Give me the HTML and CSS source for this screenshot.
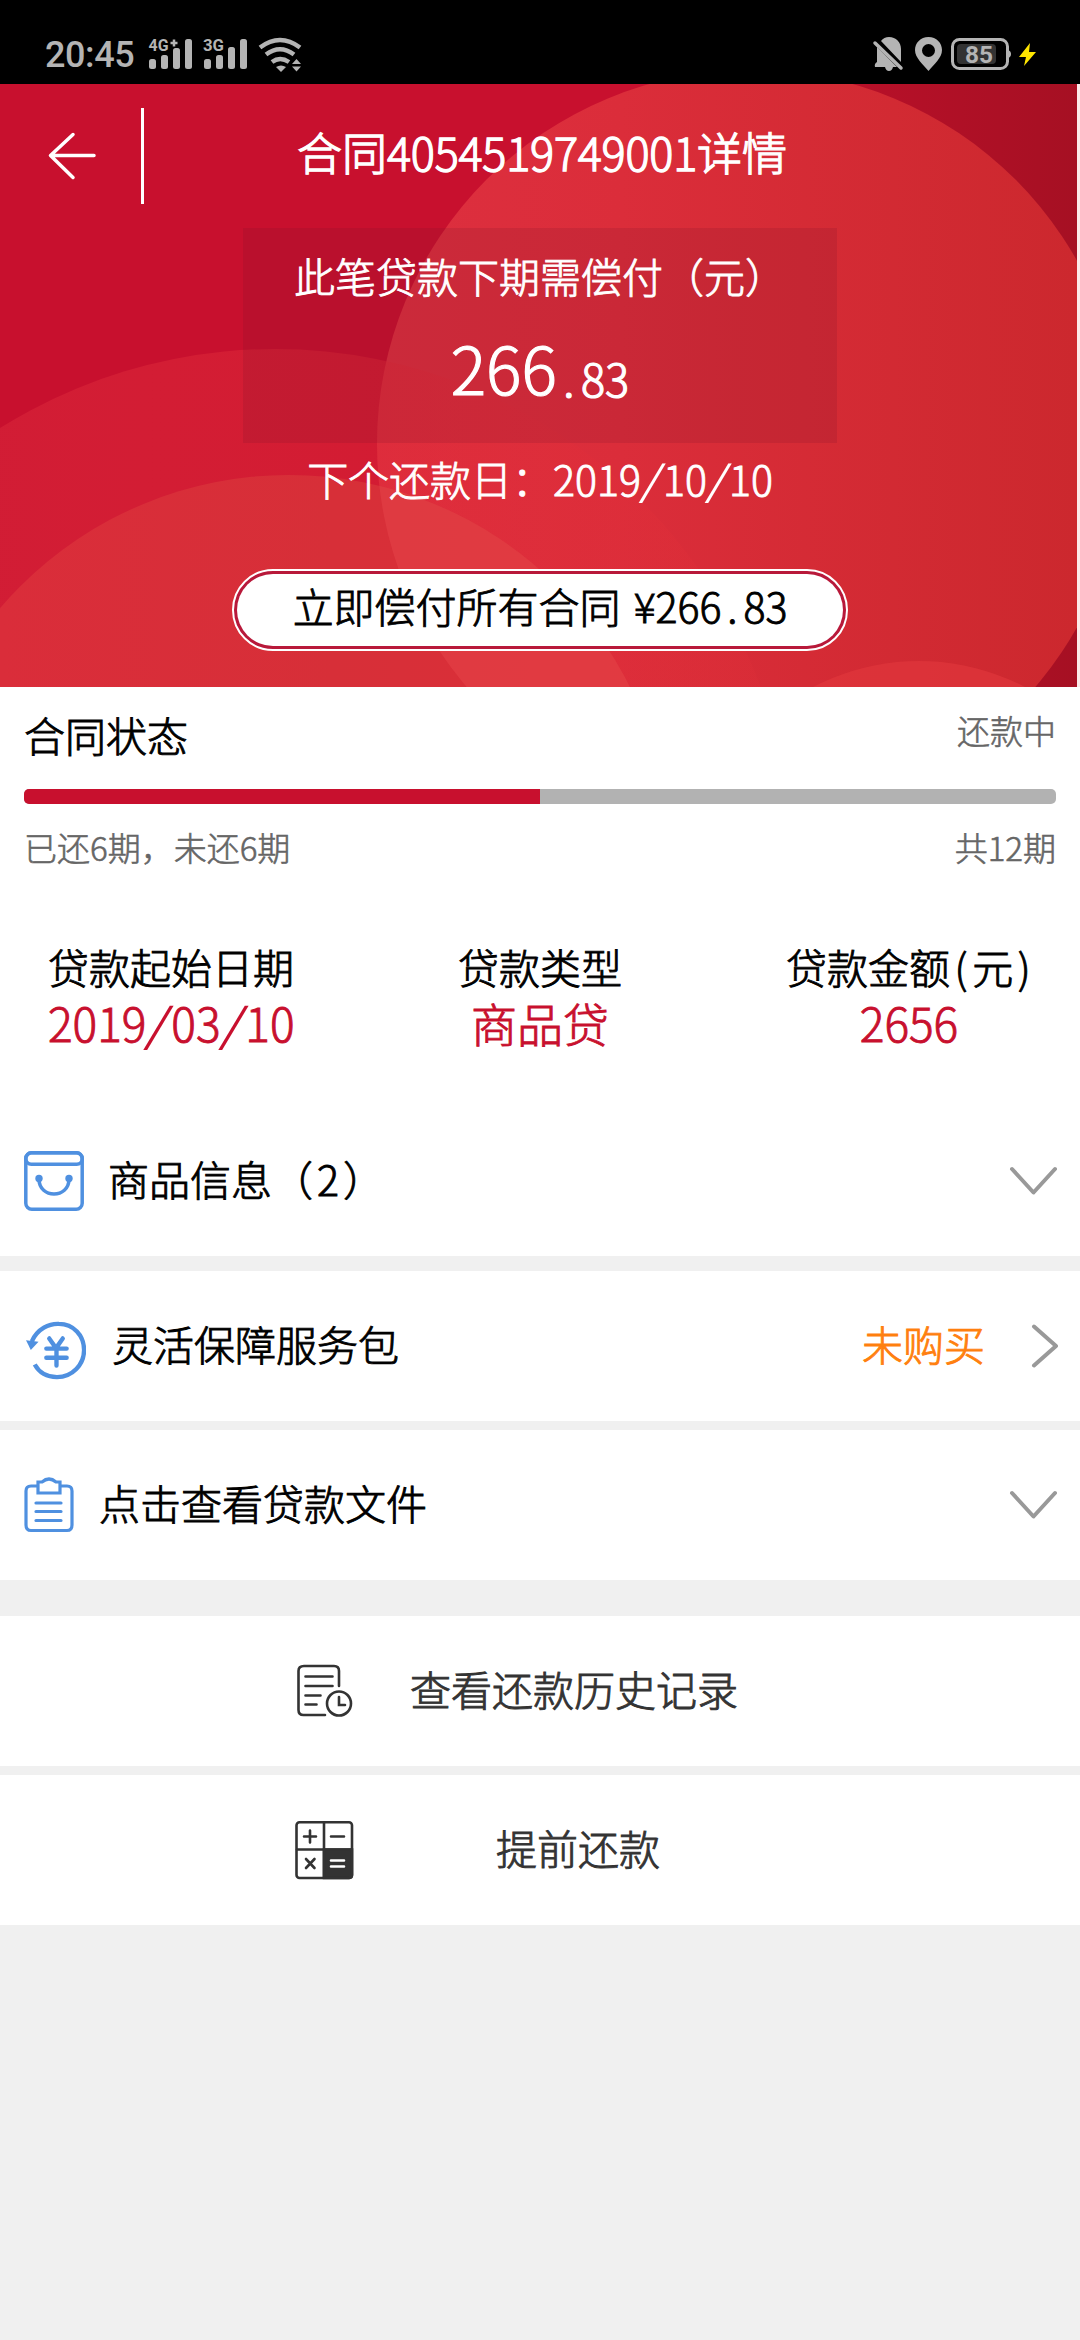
FILE: index.html
```html
<!DOCTYPE html>
<html lang="zh-CN">
<head>
<meta charset="utf-8">
<title>合同详情</title>
<link rel="stylesheet" href="styles.css">
</head>
<body>
<div class="status-bar">
  <span class="clock">20:45</span>
  <svg class="signals" width="154" height="36" viewBox="148 36 154 36" fill="#b4b4b4">
    <text class="net" x="148.500" y="51" textLength="20" lengthAdjust="spacingAndGlyphs">4G</text>
    <path d="M174 39.500v7M170.500 43h7" stroke="#b4b4b4" stroke-width="2.500"/>
    <rect x="149" y="59" width="7" height="10" rx="2.500"/><rect x="161" y="55" width="7" height="14" rx="2.500"/><rect x="173" y="48" width="7" height="21" rx="2.500"/><rect x="185" y="39" width="7" height="30" rx="2.500"/>
    <text class="net" x="203" y="51" textLength="21" lengthAdjust="spacingAndGlyphs">3G</text>
    <rect x="204" y="59" width="7" height="10" rx="2.500"/><rect x="216" y="55" width="7" height="14" rx="2.500"/><rect x="228" y="47" width="7" height="22" rx="2.500"/><rect x="240" y="39" width="7" height="30" rx="2.500"/>
    <g fill="none" stroke="#b4b4b4" stroke-width="4.500"><path d="M260 47.500q20-15 40 0M266 54.500q14-10.500 28 0M272 62q8-6 17 0"/></g>
    <path d="M276 67q5-3 10 0l-5 5z"/><path d="M292 64l4.500-5 4.500 5zM292 66.500h9l-4.500 5z"/>
  </svg>
  <svg class="status-icons" width="170" height="38" viewBox="870 35 170 38" fill="#b4b4b4">
    <path d="M880 41q3-4 8-4c7 0 12 5 12 12v13zM876 47l20 20h-4q-1 4-4 4t-4-4h-10q-1-3 2-5z"/>
    <path d="M874 43l26 25" stroke="#b4b4b4" stroke-width="3.500" stroke-linecap="round"/>
    <path fill-rule="evenodd" d="M927.500 37c-8 0-13.500 6-13.500 13 0 8 8 14 13.500 21 5.500-7 13.500-13 13.500-21 0-7-5.500-13-13.500-13zm0 7a6.500 6.500 0 1 1 0 13 6.500 6.500 0 0 1 0-13z"/>
    <rect x="951.500" y="39.500" width="55" height="29" rx="7" fill="none" stroke="#b4b4b4" stroke-width="3"/>
    <rect x="956" y="44" width="39" height="20" rx="4" fill="#333"/><path d="M1007 50q3 1 3 4t-3 4z"/>
    <text class="battery" x="964" y="62.500" textLength="28" lengthAdjust="spacingAndGlyphs">85</text>
    <path d="M1029 43l-11 14h7l-2 9 12-14h-7z" fill="#ffe600"/>
  </svg>
</div>

<header class="hero">
  <svg class="hero-bg" width="1077" height="603" viewBox="0 84 1077 603">
    <defs>
      <linearGradient id="base" gradientUnits="userSpaceOnUse" x1="0" y1="0" x2="1076" y2="0"><stop offset="0" stop-color="#c8102e"/><stop offset=".6" stop-color="#c8102e"/><stop offset="1" stop-color="#a61023"/></linearGradient>
      <linearGradient id="disc" gradientUnits="userSpaceOnUse" x1="377" y1="0" x2="1076" y2="0"><stop offset="0" stop-color="#dd2f3f"/><stop offset=".35" stop-color="#db2d3a"/><stop offset="1" stop-color="#cc282e"/></linearGradient>
      <linearGradient id="mid" gradientUnits="userSpaceOnUse" x1="0" y1="0" x2="790" y2="0"><stop offset="0" stop-color="#d52137" stop-opacity=".75"/><stop offset=".5" stop-color="#e02a38" stop-opacity=".45"/><stop offset="1" stop-color="#e5323a" stop-opacity=".15"/></linearGradient>
      <linearGradient id="low" gradientUnits="userSpaceOnUse" x1="0" y1="0" x2="667" y2="0"><stop offset="0" stop-color="#da2d3a"/><stop offset=".5" stop-color="#d72f38"/><stop offset="1" stop-color="#dc2f38"/></linearGradient>
    </defs>
    <rect y="84" width="1077" height="603" fill="url(#base)"/>
    <circle cx="751" cy="444" r="374" fill="url(#disc)"/>
    <circle cx="275" cy="867" r="518" fill="url(#mid)"/>
    <clipPath id="in-disc"><circle cx="751" cy="444" r="374"/></clipPath>
    <circle cx="289" cy="855" r="380" fill="url(#low)"/>
    <g clip-path="url(#in-disc)"><circle cx="289" cy="855" r="380" fill="#ec4a50" opacity=".4"/></g>
    <circle cx="919" cy="890" r="229" fill="#e2383e" opacity=".6" clip-path="url(#in-disc)"/>
  </svg>
  <nav class="navbar">
    <svg class="back" width="50" height="50" viewBox="47 131 50 50"><path d="M73 134.500L50.500 155.500 73 177.500M50.500 155.500H94" fill="none" stroke="#fff" stroke-width="3.500" stroke-linecap="round" stroke-linejoin="round"/></svg>
    <i class="nav-divider"></i>
    <h1>合同<span class="num">4054519749001</span>详情</h1>
  </nav>
  <section class="due-panel">
    <p class="due-label">此笔贷款下期需偿付（元）</p>
    <p class="due-amount"><span class="yuan">266</span><span class="cents"><i class="cell">.</i>83</span></p>
  </section>
  <p class="due-date">下个还款日：2019<i class="cell slash">/</i>10<i class="cell slash">/</i>10</p>
  <a class="pay-all"><span class="pay-all-inner">立即偿付所有合同<span class="pay-sum">¥266<i class="cell">.</i>83</span></span></a>
</header>

<main>
  <section class="summary">
    <div class="line state"><h2>合同状态</h2><span class="muted">还款中</span></div>
    <div class="progress"><div class="progress-done" style="width:50%"></div></div>
    <div class="line terms muted"><span>已还6期，未还6期</span><span>共12期</span></div>
    <div class="facts">
      <div class="fact"><span>贷款起始日期</span><b>2019<i class="cell slash">/</i>03<i class="cell slash">/</i>10</b></div>
      <div class="fact"><span>贷款类型</span><b>商品贷</b></div>
      <div class="fact"><span>贷款金额<i class="cell">(</i>元<i class="cell">)</i></span><b>2656</b></div>
    </div>
  </section>

  <section class="row goods">
    <svg width="60" height="60" viewBox="0 0 60 60" fill="none" stroke="#4f90e0" stroke-width="3.500"><rect x="1.800" y="1.800" width="56.400" height="56.400" rx="6"/><rect x="1.800" y="1.800" width="56.400" height="11.500" rx="5.500"/><path d="M15 28c0 20 30 20 30 0"/><g fill="#4f90e0" stroke="none"><circle cx="15" cy="27.500" r="3.700"/><circle cx="45" cy="27.500" r="3.700"/></g></svg>
    <span class="row-title">商品信息（<span class="count">2</span>）</span>
    <svg class="chev" width="48" height="30" viewBox="0 0 48 30"><path d="M3 3l21.500 23.500L46 3"/></svg>
  </section>
  <section class="row package">
    <svg width="60" height="60" viewBox="0 0 62 62" fill="none" stroke="#4f90e0" stroke-width="4.500"><path d="M6 21C12 8 24 2.500 34 3c15 0 26 12 26 27S48 58 32 58C22 58 14 54 9 45"/><path d="M0 20l13 1.500L5 30z" fill="#4f90e0" stroke="none"/><path d="M24 18l7 10 7-10M21 28.500h21M21 38h21M31.500 28v18" stroke-linecap="round"/></svg>
    <span class="row-title">灵活保障服务包</span>
    <span class="not-bought">未购买</span>
    <svg class="chev" width="28" height="44" viewBox="0 0 28 44"><path d="M3 2.500l22 19.500L3 41.500"/></svg>
  </section>
  <section class="row files">
    <svg width="50" height="56" viewBox="0 0 50 56" fill="none" stroke="#4f90e0" stroke-width="3.200"><path d="M13 9H7q-5 0-5 5v34q0 5.500 5 5.500h36q5 0 5-5.500V14q0-5-5-5h-6"/><path d="M14 5h4q7-6 14 0h4v11H14zM12 26h25M12 34.500h25M12 43.500h25" stroke-linecap="round"/></svg>
    <span class="row-title">点击查看贷款文件</span>
    <svg class="chev" width="48" height="30" viewBox="0 0 48 30"><path d="M3 3l21.500 23.500L46 3"/></svg>
  </section>

  <section class="action history">
    <svg width="60" height="60" viewBox="295 1661 60 60" fill="none" stroke="#333" stroke-width="2.600" stroke-linecap="round"><path d="M339 1686v-15q0-5-5-5h-30q-5.500 0-5.500 5v39q0 5 5 5h21.500"/><path d="M305.500 1676.500h27M305.500 1686h27M305.500 1695.500h15M305.500 1704.500h11"/><circle cx="339" cy="1703.500" r="12"/><path d="M339 1697v8h6"/></svg>
    <span>查看还款历史记录</span>
  </section>
  <section class="action prepay">
    <svg width="60" height="60" viewBox="295 1820 60 60" fill="none" stroke="#333" stroke-width="2.600" stroke-linecap="round"><path d="M324 1849.500h28V1875q0 3-3 3h-25z" fill="#333"/><rect x="296.500" y="1822.300" width="55.500" height="55.700" rx="3"/><path d="M324 1823v54M297 1849.500h54M304 1836.500h12M310 1830.500v12M331 1836.500h13M306 1859l8.500 9M314.500 1859l-8.500 9"/><path d="M331 1860.500h13M331 1866.500h13" stroke="#fff"/></svg>
    <span>提前还款</span>
  </section>
</main>
</body>
</html>
```
FILE: styles.css
```css
* { box-sizing: border-box; margin: 0; padding: 0; }
body {
  width: 1080px;
  min-height: 2340px;
  background: #f0f0f0;
  color: #000;
  font-family: "Noto Sans CJK SC", sans-serif;
  font-size: 41px;
  font-weight: 300;
  line-height: 48px;
  -webkit-text-stroke: .9px currentColor;
}
h1, h2, b { font-weight: 300; }
i { font-style: normal; }
svg { display: block; flex: none; }
.num { letter-spacing: -0.005em; }
.cell { display: inline-block; width: .54em; text-align: center; }
.slash { transform: scaleX(1.75); -webkit-text-stroke-width: 0; }

.status-bar {
  display: flex;
  height: 84px;
  padding: 35px 39px 0 45px;
  background: #000;
  color: #b4b4b4;
  -webkit-text-stroke-width: 0;
}
.clock { width: 103px; font: 500 36px/40px Roboto, sans-serif; letter-spacing: -.4px; }
.signals { margin-top: 1px; }
.status-icons { margin-left: auto; }
.net { font: 700 16px Roboto, sans-serif; }
.battery { font: 700 24px Roboto, sans-serif; }

.hero { position: relative; height: 603px; color: #fff; background: #fdeaea; text-align: center; }
.hero-bg { position: absolute; left: 0; top: 0; }
.navbar, .due-panel, .due-date, .pay-all { position: relative; }
.navbar { display: flex; align-items: center; height: 144px; padding-left: 47px; }
.nav-divider { width: 3px; height: 96px; margin-left: 44px; background: #fff; }
.navbar h1 { width: 796px; font-size: 45px; line-height: 60px; padding-bottom: 8px; -webkit-text-stroke-width: 1.3px; }
.due-panel { width: 594px; height: 215px; margin: 0 auto; padding-top: 23px; background: rgba(120, 20, 40, .17); }
.due-amount { display: flex; justify-content: center; align-items: baseline; height: 90px; margin-top: 22px; line-height: 90px; -webkit-text-stroke-width: 1.2px; }
.yuan { font-size: 66px; }
.cents { position: relative; top: 2px; font-size: 45px; }
.due-date { margin-top: 11px; }
.pay-all {
  display: block;
  width: 616px;
  height: 82px;
  margin: 67px auto 0;
  padding: 3px;
  border: 2px solid #fff;
  border-radius: 41px;
  background: #b8193a;
  color: #000;
}
.pay-all-inner { display: block; height: 72px; border-radius: 36px; background: #fff; line-height: 63px; }
.pay-sum { margin-left: 13px; }

.summary { height: 412px; padding: 23px 24px 0; background: #fff; }
.line { display: flex; justify-content: space-between; }
.line h2 { font-size: 41px; }
.muted { color: #666; font-size: 33px; -webkit-text-stroke-width: .6px; }
.state .muted { line-height: 40px; }
.progress { height: 15px; margin-top: 31px; border-radius: 5px; background: #b2b2b2; overflow: hidden; }
.progress-done { height: 15px; background: #c8102e; }
.terms { margin-top: 19px; }
.facts { display: flex; justify-content: space-between; margin-top: 71px; padding: 0 24px; }
.fact { width: 246px; text-align: center; white-space: nowrap; }
.fact b { display: block; height: 56px; color: #c8102e; font-size: 46px; line-height: 64px; }

.row { display: flex; align-items: center; height: 150px; padding: 0 24px; background: #fff; }
.row-title { margin-left: 24px; padding-bottom: 6px; }
.count { margin: 0 4px; }
.chev { margin-left: auto; fill: none; stroke: #999; stroke-width: 4; stroke-linecap: round; stroke-linejoin: round; }
.goods { height: 157px; padding-top: 6px; padding-right: 23px; }
.package { margin-top: 15px; padding-right: 21px; }
.package > svg:first-child { margin: 10px 0 0 2px; }
.package .row-title { margin-left: 26px; }
.not-bought { margin-left: auto; margin-right: 46px; padding-bottom: 6px; color: #ff7f0e; }
.package .chev { margin-left: 0; }
.files { margin-top: 9px; padding-right: 23px; }
.files .row-title { margin-left: 25px; }

.action { display: flex; align-items: center; height: 150px; padding-left: 295px; background: #fff; color: #333; }
.action span { width: 328px; margin-left: 55px; padding-bottom: 6px; text-align: center; }
.history { margin-top: 36px; }
.prepay { margin-top: 9px; }
.prepay span { margin-left: 59px; }
```
